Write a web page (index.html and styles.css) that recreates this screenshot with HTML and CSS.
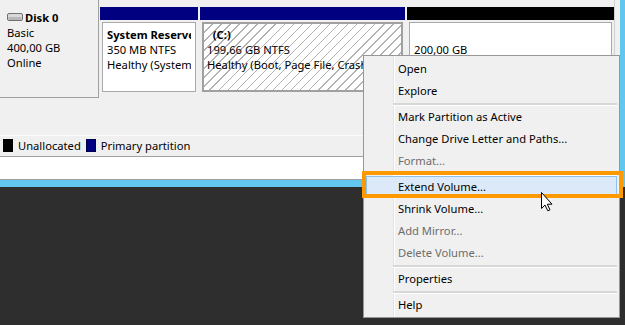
FILE: index.html
```html
<!DOCTYPE html>
<html>
<head>
<meta charset="utf-8">
<link rel="stylesheet" href="styles.css">
</head>
<body>
<div class="window">
  <div class="disks">
    <div class="disk-label">
      <div class="disk-name">
        <svg class="disk-icon" width="16" height="8" viewBox="0 0 16 8"><rect x="0.5" y="0.5" width="15" height="7" rx="1.5" fill="#d9d9d9" stroke="#707070"/><rect x="1.5" y="4" width="13" height="3" fill="#b8b8b8"/></svg>
        <b>Disk 0</b>
      </div>
      <div>Basic</div>
      <div>400,00 GB</div>
      <div>Online</div>
    </div>
    <div class="parts">
      <div class="part p-sys">
        <div class="part-head primary"></div>
        <div class="part-body">
          <div class="box"><div class="txt">
            <div><b>System Reserved</b></div>
            <div>350 MB NTFS</div>
            <div>Healthy (System, Active, Primary Partition)</div>
          </div></div>
        </div>
      </div>
      <div class="part p-c">
        <div class="part-head primary"></div>
        <div class="part-body">
          <div class="box hatched"><div class="txt">
            <div><b>&nbsp;&nbsp;(C:)</b></div>
            <div>199,66 GB NTFS</div>
            <div>Healthy (Boot, Page File, Crash Dump, Primary Partition)</div>
          </div></div>
        </div>
      </div>
      <div class="part p-un">
        <div class="part-head unalloc"></div>
        <div class="part-body">
          <div class="box"><div class="txt">
            <div>&nbsp;</div>
            <div>200,00 GB</div>
            <div>Unallocated</div>
          </div></div>
        </div>
      </div>
    </div>
  </div>
  <div class="legend">
    <span class="sw sw-black"></span><span class="lg-text">Unallocated</span>
    <span class="sw sw-blue"></span><span class="lg-text">Primary partition</span>
  </div>
  <div class="blank"></div>
</div>

<div class="menu">
  <div class="item">Open</div>
  <div class="item">Explore</div>
  <div class="sep"></div>
  <div class="item">Mark Partition as Active</div>
  <div class="item">Change Drive Letter and Paths...</div>
  <div class="item dis">Format...</div>
  <div class="sep"></div>
  <div class="item hot">Extend Volume...</div>
  <div class="item">Shrink Volume...</div>
  <div class="item dis">Add Mirror...</div>
  <div class="item dis">Delete Volume...</div>
  <div class="sep"></div>
  <div class="item">Properties</div>
  <div class="sep"></div>
  <div class="item">Help</div>
</div>

<div class="callout"></div>

<svg class="cursor" width="13" height="21" viewBox="0 0 13 21"><path d="M1.5 1.5 L1.5 17.5 L5 14 L7.8 19.8 L10 18.8 L7.3 13.2 L12 13.2 Z" fill="#fff" stroke="#000" stroke-width="1" stroke-linejoin="miter"/></svg>
</body>
</html>
```
FILE: styles.css
```css
* { box-sizing: border-box; }
html, body { margin: 0; padding: 0; }
body {
  width: 625px;
  height: 325px;
  overflow: hidden;
  position: relative;
  background: #2e2e2e;
  font-family: "Noto Sans", "Segoe UI", sans-serif;
  font-size: 11.2px;
  color: #000;
}
b { font-weight: 700; }

.window {
  width: 625px;
  background: #f0f0f0;
  border-right: 5px solid #62c7ee;
  border-bottom: 7px solid #62c7ee;
}

.disks {
  display: flex;
  align-items: flex-start;
  height: 135px;
  width: 615px;
  border-right: 1px solid #d0d0d0;
}

.disk-label {
  width: 101px;
  height: 98px;
  border-right: 1px solid #a0a0a0;
  border-bottom: 1px solid #a0a0a0;
  padding: 10px 0 0 7px;
  line-height: 15px;
}
.disk-name {
  display: flex;
  align-items: center;
  gap: 2px;
}
.disk-icon { margin-top: -2px; }

.parts {
  display: flex;
  gap: 2px;
  padding: 7px 0 0 1px;
}
.part { display: flex; flex-direction: column; }
.p-sys { width: 98px; }
.p-c { width: 205px; }
.p-un { width: 207px; }
.part-head { height: 13px; }
.primary { background: #000080; }
.unalloc { background: #000; }
.part-body { padding: 2px 2px 4px 2px; }

.box {
  height: 70px;
  background: #fff;
  border: 1px solid #a9a9a9;
  padding: 4px 4px 0 4px;
  line-height: 15px;
}
.box.hatched {
  border: 2px solid #a0a0a0;
  padding: 3px 3px 0 3px;
  background: repeating-linear-gradient(135deg, #fff 0 5.4px, #b2b2b2 5.4px 6.4px);
}
.txt { overflow: hidden; white-space: nowrap; }

.legend {
  display: flex;
  align-items: center;
  height: 22px;
  border-top: 1px solid #fbfbfb;
  border-bottom: 1px solid #a0a0a0;
  padding: 0 0 2px 3px;
}
.sw { width: 10px; height: 13px; margin-right: 5px; }
.sw-black { background: #000; }
.sw-blue { background: #000080; border: 1px solid #000050; }
.lg-text { margin-right: 5px; }

.blank {
  height: 23px;
  background: #fff;
  border-bottom: 1px solid #a0a0a0;
}

.menu {
  position: absolute;
  left: 363px;
  top: 55px;
  width: 257px;
  height: 263px;
  border: 1px solid #979797;
  padding: 2px 0;
  background: linear-gradient(to right, #f0f0f0 29px, #e2e3e3 29px 30px, #fff 30px 31px, #f0f0f0 31px);
}
.item {
  height: 22px;
  line-height: 22px;
  margin: 0 2px;
  padding-left: 32px;
  white-space: nowrap;
}
.item.dis { color: #6d6d6d; }
.item.hot {
  background: #dce9f8;
  border: 1px solid #8fc0ea;
  line-height: 20px;
  padding-left: 31px;
}
.sep {
  height: 4px;
  padding-top: 1px;
  margin: 0 2px 0 29px;
}
.sep::after {
  content: "";
  display: block;
  height: 2px;
  background: #d7d7d7;
  border-bottom: 1px solid #fff;
}

.callout {
  position: absolute;
  left: 362px;
  top: 171px;
  width: 261px;
  height: 27px;
  border: 4px solid #fe9a00;
}

.cursor {
  position: absolute;
  left: 540px;
  top: 191px;
}
```
